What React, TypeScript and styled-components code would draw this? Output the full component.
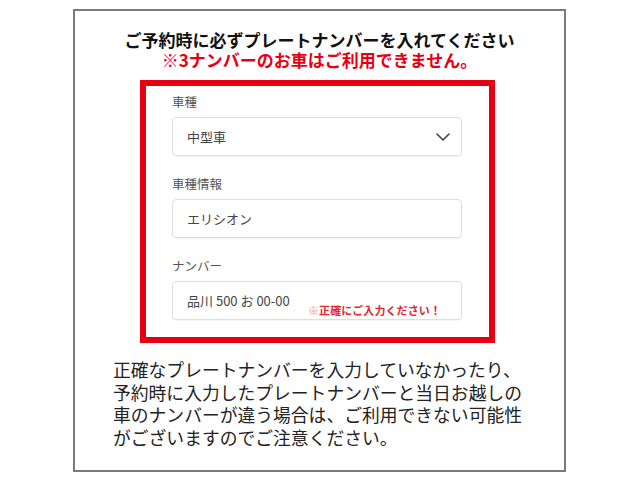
import React from 'react'
import styled, { createGlobalStyle } from 'styled-components'

const red = '#e60012'
const font = `'Noto Sans CJK JP', 'Noto Sans', sans-serif`

const GlobalStyle = createGlobalStyle`
  html, body {
    margin: 0;
    padding: 0;
    background: #fff;
  }
  body {
    font-family: ${font};
    color: #222;
  }
`

const Frame = styled.div`
  box-sizing: border-box;
  width: 493px;
  height: 463px;
  margin: 9px 0 0 73px;
  border: 2px solid #7b7b7b;
  padding-top: 19px;
  display: flex;
  flex-direction: column;
`

const Title = styled.h1`
  margin: 0;
  font-size: 17px;
  line-height: 20px;
  font-weight: 700;
  text-align: center;
  color: #111;
`

const TitleNote = styled.span`
  display: block;
  color: ${red};
`

const RedBox = styled.div`
  box-sizing: border-box;
  width: 355px;
  margin: 10px 0 0 65px;
  border: 6px solid ${red};
  padding: 7px 27px 17px 26px;
  display: flex;
  flex-direction: column;
  gap: 19px;
`

const Field = styled.div`
  display: flex;
  flex-direction: column;
  gap: 6px;
`

const Label = styled.div`
  font-size: 12.5px;
  line-height: 18px;
  color: #555;
`

const InputBox = styled.div`
  position: relative;
  box-sizing: border-box;
  height: 39px;
  border: 1px solid #dedede;
  border-radius: 4px;
  box-shadow: 0 1px 1px rgba(0, 0, 0, 0.04);
  display: flex;
  align-items: center;
  justify-content: space-between;
  padding: 0 11px 0 14px;
  font-size: 13px;
  color: #444;
`

const Chevron = styled.svg`
  width: 14px;
  height: 8px;
  display: block;
`

const InputNote = styled.span`
  position: absolute;
  left: 135px;
  top: 21px;
  font-size: 11px;
  line-height: 14px;
  font-weight: 700;
  color: #e2262b;
  letter-spacing: 0.1px;
`

const Mark = styled.span`
  color: #f08a8e;
  font-weight: 400;
`

const Notice = styled.p`
  margin: 15px 0 0 38px;
  font-size: 17.8px;
  line-height: 22.5px;
  color: #222;
`

const App: React.FC = () => (
  <>
    <GlobalStyle />
    <Frame>
      <Title>
        ご予約時に必ずプレートナンバーを入れてください
        <TitleNote>※3ナンバーのお車はご利用できません。</TitleNote>
      </Title>
      <RedBox>
        <Field>
          <Label>車種</Label>
          <InputBox>
            <span>中型車</span>
            <Chevron viewBox="0 0 14 8" fill="none">
              <polyline
                points="1,1 7,7 13,1"
                stroke="#444"
                strokeWidth="1.6"
                strokeLinecap="round"
                strokeLinejoin="round"
              />
            </Chevron>
          </InputBox>
        </Field>
        <Field>
          <Label>車種情報</Label>
          <InputBox>
            <span>エリシオン</span>
          </InputBox>
        </Field>
        <Field>
          <Label>ナンバー</Label>
          <InputBox>
            <span>品川 500 お 00-00</span>
            <InputNote>
              <Mark>※</Mark>正確にご入力ください！
            </InputNote>
          </InputBox>
        </Field>
      </RedBox>
      <Notice>
        正確なプレートナンバーを入力していなかったり、
        <br />
        予約時に入力したプレートナンバーと当日お越しの
        <br />
        車のナンバーが違う場合は、ご利用できない可能性
        <br />
        がございますのでご注意ください。
      </Notice>
    </Frame>
  </>
)

export default App
